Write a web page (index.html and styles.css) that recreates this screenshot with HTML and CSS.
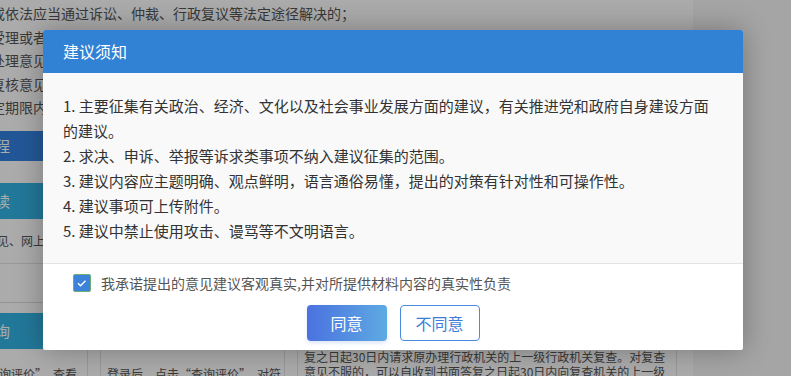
FILE: index.html
```html
<!doctype html>
<html lang="zh-CN">
<head>
    <meta charset="UTF-8">
    <meta name="viewport" content="width=device-width, initial-scale=1.0">
    <title>建议须知</title>
    <link rel="stylesheet" href="styles.css">
</head>
<body>
<div class="page">
    <div class="intro">
        <p>或依法应当通过诉讼、仲裁、行政复议等法定途径解决的；</p>
        <p>受理或者不予受理的书面告知之日起30日内提出复查请求；</p>
        <p>处理意见不服的，可以自收到书面答复之日起30日内提出；</p>
        <p>复核意见不服，仍以同一事实和理由提出投诉请求的；</p>
        <p>定期限内未提出复查或者复核请求的。</p>
    </div>
    <div class="cols">
        <div class="col col-first">
            <div class="card card-top">
                <div class="bar bar-blue">办事流程</div>
                <div class="bar bar-teal">政策解读</div>
                <p class="line">意见、网上信访</p>
            </div>
            <div class="card card-low">
                <div class="bar bar-teal">结果查询</div>
                <p class="line">“查询评价”，查看</p>
            </div>
        </div>
        <div class="col">
            <div class="card card-top">
                <div class="bar bar-blue">受理范围</div>
                <div class="bar bar-teal">网上信访</div>
                <p class="line">登录后提交信访事项</p>
            </div>
            <div class="card card-low">
                <div class="bar bar-teal">评价查询</div>
                <p class="line">登录后，点击“查询评价”，对符</p>
            </div>
        </div>
        <div class="col">
            <div class="card card-long">
                <div class="bar bar-blue">复查复核</div>
                <div class="bar bar-teal">办理时限</div>
                <p class="text">
                    信访人对行政机关作出的信访事项处理意见不服的，可以<br>
                    自收到书面答复之日起30日内请求原办理行政机关的上<br>
                    一级行政机关复查。收到复查请求的行政机关应当自收<br>
                    到复查请求之日起30日内提出复查意见，并予以书面答<br>
                    复。信访人对复查意见不服的，可以自收到书面答复之<br>
                    日起30日内向复查机关的上一级行政机关请求复核。收<br>
                    到复核请求的行政机关应当自收到复核请求之日起30日<br>
                    内提出复核意见。信访人对行政机关作出的处理意见不服，<br>
                    复之日起30日内请求原办理行政机关的上一级行政机关复查。对复查<br>
                    意见不服的，可以自收到书面答复之日起30日内向复查机关的上一级
                </p>
            </div>
        </div>
    </div>
</div>

<div class="mask"></div>

<div class="dialog">
    <div class="dialog-head">建议须知</div>
    <div class="dialog-body">
        <p>1. 主要征集有关政治、经济、文化以及社会事业发展方面的建议，有关推进党和政府自身建设方面的建议。</p>
        <p>2. 求决、申诉、举报等诉求类事项不纳入建议征集的范围。</p>
        <p>3. 建议内容应主题明确、观点鲜明，语言通俗易懂，提出的对策有针对性和可操作性。</p>
        <p>4. 建议事项可上传附件。</p>
        <p>5. 建议中禁止使用攻击、谩骂等不文明语言。</p>
    </div>
    <div class="dialog-foot">
        <label class="agree">
            <svg class="check" width="18" height="18" viewBox="0 0 18 18">
                <rect x="0.5" y="0.5" width="17" height="17" rx="1.5" fill="#3b82d8" stroke="#6bae7a"/>
                <path d="M5 9.3l2.5 2.4 5-5" fill="none" stroke="#fff" stroke-width="1.4"/>
            </svg>
            <span>我承诺提出的意见建议客观真实,并对所提供材料内容的真实性负责</span>
        </label>
        <div class="actions">
            <button class="btn btn-ok">同意</button>
            <button class="btn btn-no">不同意</button>
        </div>
    </div>
</div>
</body>
</html>
```

FILE: styles.css
```css
* {
    margin: 0;
    padding: 0;
    box-sizing: border-box;
}

body {
    width: 791px;
    height: 376px;
    overflow: hidden;
    position: relative;
    background: #f6f6f6;
    color: #555;
    font-family: "Noto Sans CJK SC", "Liberation Sans", sans-serif;
}

/* 背景页面 */
.page {
    width: 693px;
    height: 376px;
    overflow: hidden;
    background: #fff;
}

.intro {
    margin-left: -9px;
    padding-top: 2px;
    font-size: 14px;
    line-height: 23.5px;
    white-space: nowrap;
}

.cols {
    display: grid;
    grid-template-columns: 128px 185px 380px;
    column-gap: 12px;
    margin-left: -40px;
    margin-top: 11px;
}

.card {
    border: 1px solid #e3e3e3;
    border-top: 0;
}

.card-top {
    padding-bottom: 11px;
}

.card-low {
    margin-top: 38px;
    border-top: 1px solid #dcdcdc;
    padding-top: 10px;
    height: 120px;
}

.card-long {
    height: 300px;
}

.bar {
    color: #fff;
    font-size: 15px;
    padding-left: 10px;
    white-space: nowrap;
}

.col-first .bar {
    padding-left: 0;
    text-indent: -11px;
}

.bar-blue {
    height: 30px;
    line-height: 30px;
    background: linear-gradient(90deg, #2e7bdc, #3a8ae8);
}

.bar-teal {
    height: 36px;
    line-height: 36px;
    margin-top: 22px;
    background: #33b4e4;
}

.card-low .bar-teal {
    margin-top: 0;
}

.line {
    font-size: 12px;
    line-height: 22px;
    margin-top: 11px;
    padding-left: 6px;
    white-space: nowrap;
}

.card-low .line {
    margin-top: 14px;
}

.col-first .card-top .line {
    padding-left: 24px;
}

.col-first .card-low .line {
    padding-left: 14px;
}

.text {
    font-size: 12px;
    line-height: 15px;
    padding: 10px 6px 0;
    white-space: nowrap;
}

.mask {
    position: absolute;
    left: 0;
    top: 0;
    right: 0;
    bottom: 0;
    background: rgba(0, 0, 0, 0.33);
}

/* 弹窗 */
.dialog {
    position: absolute;
    left: 43px;
    top: 30px;
    width: 700px;
    background: #fff;
    border-radius: 2px;
    overflow: hidden;
    box-shadow: 0 0 28px rgba(0, 0, 0, 0.3);
}

.dialog-head {
    height: 43px;
    line-height: 43px;
    padding-left: 20px;
    background: #3181d4;
    color: #fff;
    font-size: 16px;
}

.dialog-body {
    background: #f9f9f9;
    padding: 20px 28px 20px 20px;
    border-bottom: 1px solid #e4e4e4;
    color: #333;
    font-size: 15px;
    line-height: 25px;
}

.dialog-foot {
    padding: 10px 0 9px;
}

.agree {
    display: flex;
    align-items: center;
    gap: 10px;
    height: 18px;
    padding-left: 30px;
    color: #555;
    font-size: 14px;
}

.check {
    display: block;
    flex: none;
}

.actions {
    display: flex;
    justify-content: center;
    gap: 13px;
    margin-top: 13px;
}

.btn {
    width: 80px;
    height: 36px;
    border-radius: 4px;
    font-family: inherit;
    font-size: 16px;
    cursor: pointer;
}

.btn-ok {
    border: 0;
    color: #fff;
    background: linear-gradient(90deg, #4a72df, #5eaae3);
    box-shadow: 0 2px 4px rgba(74, 120, 224, 0.2);
}

.btn-no {
    border: 1px solid #4a8ae4;
    color: #3c7dd8;
    background: #fff;
}
```
